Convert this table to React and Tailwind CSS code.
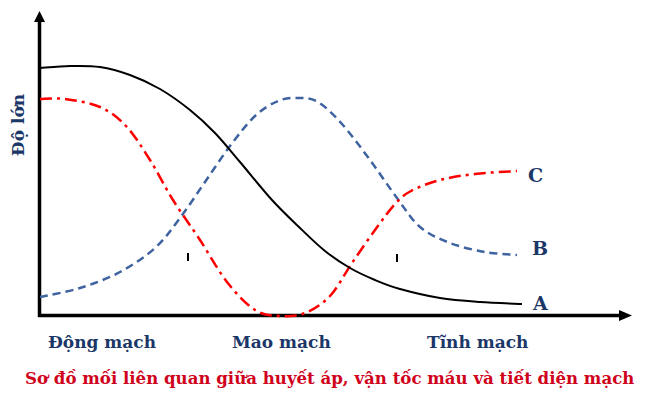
import React from "react";

const curveA = [
  [40, 68], [70, 66], [100, 67], [130, 75], [160, 89], [190, 110], [215, 133],
  [240, 162], [272, 200], [300, 228], [325, 251], [350, 268], [375, 280],
  [400, 289], [440, 298], [480, 302], [522, 304],
];

const curveB = [
  [40, 297], [80, 288], [120, 272], [155, 248], [180, 218], [205, 182], [230, 146],
  [255, 116], [278, 101], [298, 98], [318, 102], [342, 124], [370, 160], [397, 198],
  [420, 227], [450, 243], [485, 252], [517, 255],
];

const curveC = [
  [40, 99], [65, 99], [100, 107], [126, 126], [150, 160], [173, 200], [200, 240],
  [227, 282], [255, 310], [280, 316], [305, 313], [330, 296], [352, 263], [375, 230],
  [395, 204], [411, 191], [440, 180], [475, 174], [517, 171],
];

// catmull-rom -> cubic bezier
const smooth = (pts) => {
  let d = `M${pts[0][0]},${pts[0][1]}`;
  for (let i = 0; i < pts.length - 1; i++) {
    const p0 = pts[i - 1] || pts[i];
    const p1 = pts[i];
    const p2 = pts[i + 1];
    const p3 = pts[i + 2] || p2;
    const c1x = p1[0] + (p2[0] - p0[0]) / 6;
    const c1y = p1[1] + (p2[1] - p0[1]) / 6;
    const c2x = p2[0] - (p3[0] - p1[0]) / 6;
    const c2y = p2[1] - (p3[1] - p1[1]) / 6;
    d += ` C${c1x},${c1y} ${c2x},${c2y} ${p2[0]},${p2[1]}`;
  }
  return d;
};

const serif = { fontFamily: '"DejaVu Serif", "Liberation Serif", serif' };

const App = () => {
  return (
    <div
      className="w-[652px] h-[404px] bg-white flex flex-col overflow-hidden"
      style={serif}
    >
      <svg width="652" height="322" viewBox="0 0 652 322" className="block shrink-0">
        {/* axes */}
        <line x1="39.5" y1="20" x2="39.5" y2="317" stroke="#000" strokeWidth="3.5" />
        <polygon points="39.5,11 34,22 45,22" fill="#000" />
        <line x1="38" y1="315.5" x2="621" y2="315.5" stroke="#000" strokeWidth="3.5" />
        <polygon points="632,315.5 619,310 619,321" fill="#000" />

        {/* curves */}
        <path d={smooth(curveB)} fill="none" stroke="#3e63a0" strokeWidth="2.5" strokeDasharray="8 5" />
        <path d={smooth(curveC)} fill="none" stroke="#ff0000" strokeWidth="2.5" strokeDasharray="12 5 3 5" />
        <path d={smooth(curveA)} fill="none" stroke="#000" strokeWidth="2" />

        {/* ticks */}
        <line x1="188" y1="253" x2="188" y2="261" stroke="#000" strokeWidth="2" />
        <line x1="397" y1="254" x2="397" y2="262" stroke="#000" strokeWidth="2" />

        <g fill="#1b3768" fontWeight="700" fontSize="19" style={serif}>
          <text x="528" y="182">C</text>
          <text x="532" y="255">B</text>
          <text x="533" y="310">A</text>
          <text x="24" y="125" textAnchor="middle" transform="rotate(-90 24 125)" fontSize="17">
            Độ lớn
          </text>
        </g>
      </svg>

      <div className="flex mt-[8px] h-[24px] text-[17px] leading-[24px] font-bold text-[#1b3768] whitespace-nowrap">
        <div className="w-[232px] pl-[48px]">Động mạch</div>
        <div className="w-[195px]">Mao mạch</div>
        <div>Tĩnh mạch</div>
      </div>

      <div className="mt-[12px] pl-[25px] text-[16.6px] leading-[24px] font-bold text-[#d0021b] whitespace-nowrap">
        Sơ đồ mối liên quan giữa huyết áp, vận tốc máu và tiết diện mạch
      </div>
    </div>
  );
};

export default App;
